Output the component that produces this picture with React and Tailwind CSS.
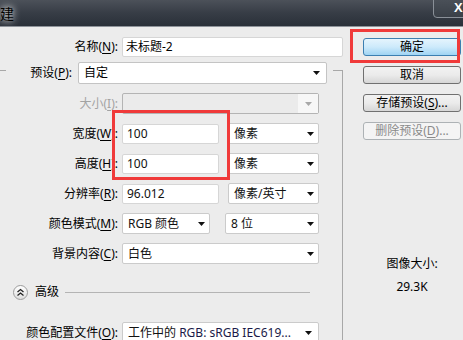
import React from "react";

const Arrow = ({ gray }) => (
  <svg width="7" height="4" viewBox="0 0 7 4" className="shrink-0">
    <polygon points="0,0 7,0 3.5,4" fill={gray ? "#a8a8a8" : "#111"} />
  </svg>
);

const Lbl = ({ t, u, w = "w-[118px]", disabled }) => (
  <div className={`${w} shrink-0 text-right leading-[16px] ${disabled ? "text-[#a3a3a3]" : "text-black"}`}>
    {t}(<span className="underline underline-offset-2">{u}</span>):
  </div>
);

const Input = ({ v, w = "w-[97px]" }) => (
  <div className={`${w} h-[20px] bg-white border border-[#d6d6d6] rounded-[2px] flex items-center pl-[4px] leading-[16px] text-[#111]`}>
    {v}
  </div>
);

const Select = ({ v, w, pr = "pr-[4px]", disabled, children }) => (
  <div
    className={`${w} h-[21px] border rounded-[2px] flex items-center justify-between pl-[5px] ${pr} leading-[16px] text-[#111] ${
      disabled ? "bg-[#ebebeb] border-[#b9b9b9]" : "bg-white border-[#cbcbcb]"
    }`}
  >
    <span className="whitespace-nowrap">{children ?? v}</span>
    <Arrow gray={disabled} />
  </div>
);

const Row = ({ children, cls = "" }) => (
  <div className={`flex items-center h-[21px] ${cls}`}>{children}</div>
);

const Btn = ({ children, primary, disabled }) => (
  <div
    className={`h-[18px] w-[98px] rounded-[3px] border flex items-center justify-center leading-[16px] ${
      primary
        ? "border-[#3c7fb1] bg-gradient-to-b from-[#e5f4fd] via-[#cdeafb] to-[#9fd4f3] text-black"
        : disabled
        ? "border-[#adb2b5] bg-[#f4f4f4] text-[#8a8a8a]"
        : "border-[#707070] bg-gradient-to-b from-[#f2f2f2] via-[#ebebeb] to-[#d6d6d6] text-black"
    }`}
  >
    {children}
  </div>
);

export default function App() {
  return (
    <div className="w-[463px] h-[340px] overflow-hidden bg-[#ececec] relative text-[12px] font-['Noto_Sans','Noto_Sans_CJK_SC',sans-serif]">
      {/* title bar */}
      <div className="h-[27px] flex justify-between overflow-hidden bg-gradient-to-b from-[#4c5159] via-[#373d46] to-[#2a3039] border-b border-[#8e939a]">
        <div className="ml-0 mt-[4px] text-[14px] leading-[18px] text-black [text-shadow:0_0_6px_rgba(255,255,255,0.9),0_0_10px_rgba(255,255,255,0.6)] font-['Noto_Sans_CJK_SC',sans-serif]">
          建
        </div>
        <div className="mt-[-2px] mr-[-14px] w-[44px] h-[20px] border border-[#8a9098] rounded-bl-[4px] bg-gradient-to-b from-[#4b5159] to-[#3a4048] flex items-center pl-[20px] text-white font-bold text-[13px] leading-[14px] font-['Liberation_Sans',sans-serif]">
          X
        </div>
      </div>

      <div className="flex h-[313px]">
        {/* left */}
        <div className="w-[343px] shrink-0 flex flex-col pt-[10px]">
          <div className="flex items-center h-[19px]">
            <Lbl t="名称" u="N" />
            <div className="ml-[4px] w-[223px] h-[20px] bg-white border border-[#d6d6d6] rounded-[2px] flex items-center pl-[3px] leading-[16px] text-black">
              未标题-2
            </div>
          </div>

          <div className="mt-[14px] flex-1 border-t border-r border-[#a8a8a8] flex flex-col">
            <div className="mt-[-9px] ml-[6px] w-[327px] h-[22px] bg-[#ececec] flex items-center">
              <Lbl t="预设" u="P" w="w-[66px]" />
              <div className="ml-[6px] w-[249px] h-[22px] bg-white border border-[#c4c4c4] rounded-[2px] flex items-center justify-between pl-[5px] pr-[6px] leading-[16px] text-black">
                <span>自定</span>
                <Arrow />
              </div>
            </div>

            <Row cls="mt-[9px]">
              <Lbl t="大小" u="I" disabled />
              <div className="ml-[4px] w-[197px] h-[21px] border border-[#b4b4b4] rounded-[2px] flex bg-[#ebebeb]">
                <div className="flex-1" />
                <div className="w-[20px] bg-[#f7f7f7] flex items-center justify-center">
                  <Arrow gray />
                </div>
              </div>
            </Row>

            <Row cls="mt-[9px]">
              <Lbl t="宽度" u="W" />
              <div className="ml-[4px]"><Input v="100" /></div>
              <div className="ml-[9px]"><Select v="像素" w="w-[91px]" /></div>
            </Row>

            <Row cls="mt-[9px]">
              <Lbl t="高度" u="H" />
              <div className="ml-[4px]"><Input v="100" /></div>
              <div className="ml-[9px]"><Select v="像素" w="w-[91px]" /></div>
            </Row>

            <Row cls="mt-[9px]">
              <Lbl t="分辨率" u="R" />
              <div className="ml-[4px]"><Input v="96.012" /></div>
              <div className="ml-[9px]"><Select v="像素/英寸" w="w-[91px]" /></div>
            </Row>

            <Row cls="mt-[9px]">
              <Lbl t="颜色模式" u="M" />
              <div className="ml-[4px]"><Select v="RGB 颜色" w="w-[88px]" /></div>
              <div className="ml-[15px]"><Select v="8 位" w="w-[94px]" /></div>
            </Row>

            <Row cls="mt-[9px]">
              <Lbl t="背景内容" u="C" />
              <div className="ml-[4px]"><Select v="白色" w="w-[197px]" /></div>
            </Row>

            <div className="mt-[20px] h-[16px] flex items-center">
              <div className="ml-[13px] w-[15px] h-[15px] rounded-full border border-[#9c9c9c] bg-gradient-to-b from-white to-[#dedede] flex items-center justify-center shrink-0">
                <svg width="9" height="9" viewBox="0 0 9 9">
                  <polyline points="1.5,4 4.5,1.5 7.5,4" fill="none" stroke="#222" strokeWidth="1.3" />
                  <polyline points="1.5,7.5 4.5,5 7.5,7.5" fill="none" stroke="#222" strokeWidth="1.3" />
                </svg>
              </div>
              <span className="ml-[7px] leading-[16px] text-black">高级</span>
              <div className="ml-[6px] mr-[32px] flex-1 h-px bg-[#b4b4b4]" />
            </div>

            <Row cls="mt-[22px]">
              <Lbl t="颜色配置文件" u="O" />
              <div className="ml-[4px]">
                <Select w="w-[197px]" pr="pr-[6px]">
                  工作中的 <span className="text-[#1a1a48]">RGB: sRGB IEC619...</span>
                </Select>
              </div>
            </Row>
          </div>
        </div>

        {/* right */}
        <div className="flex-1 flex flex-col pl-[20px] pt-[11px]">
          <div className="flex flex-col gap-[10px]">
            <Btn primary>确定</Btn>
            <Btn>取消</Btn>
            <Btn>
              存储预设(<span className="underline underline-offset-2">S</span>)...
            </Btn>
            <Btn disabled>
              删除预设(<span className="underline underline-offset-2">D</span>)...
            </Btn>
          </div>
          <div className="mt-[116px] w-[98px] flex flex-col items-center text-black">
            <div className="leading-[16px]">图像大小:</div>
            <div className="mt-[7px] leading-[16px]">29.3K</div>
          </div>
        </div>
      </div>

      {/* red annotation boxes */}
      <div className="absolute left-[350px] top-[29px] w-[110px] h-[34px] border-[3px] border-[#f03a3a]" />
      <div className="absolute left-[112px] top-[110px] w-[118px] h-[70px] border-[3px] border-[#f03a3a]" />
    </div>
  );
}
